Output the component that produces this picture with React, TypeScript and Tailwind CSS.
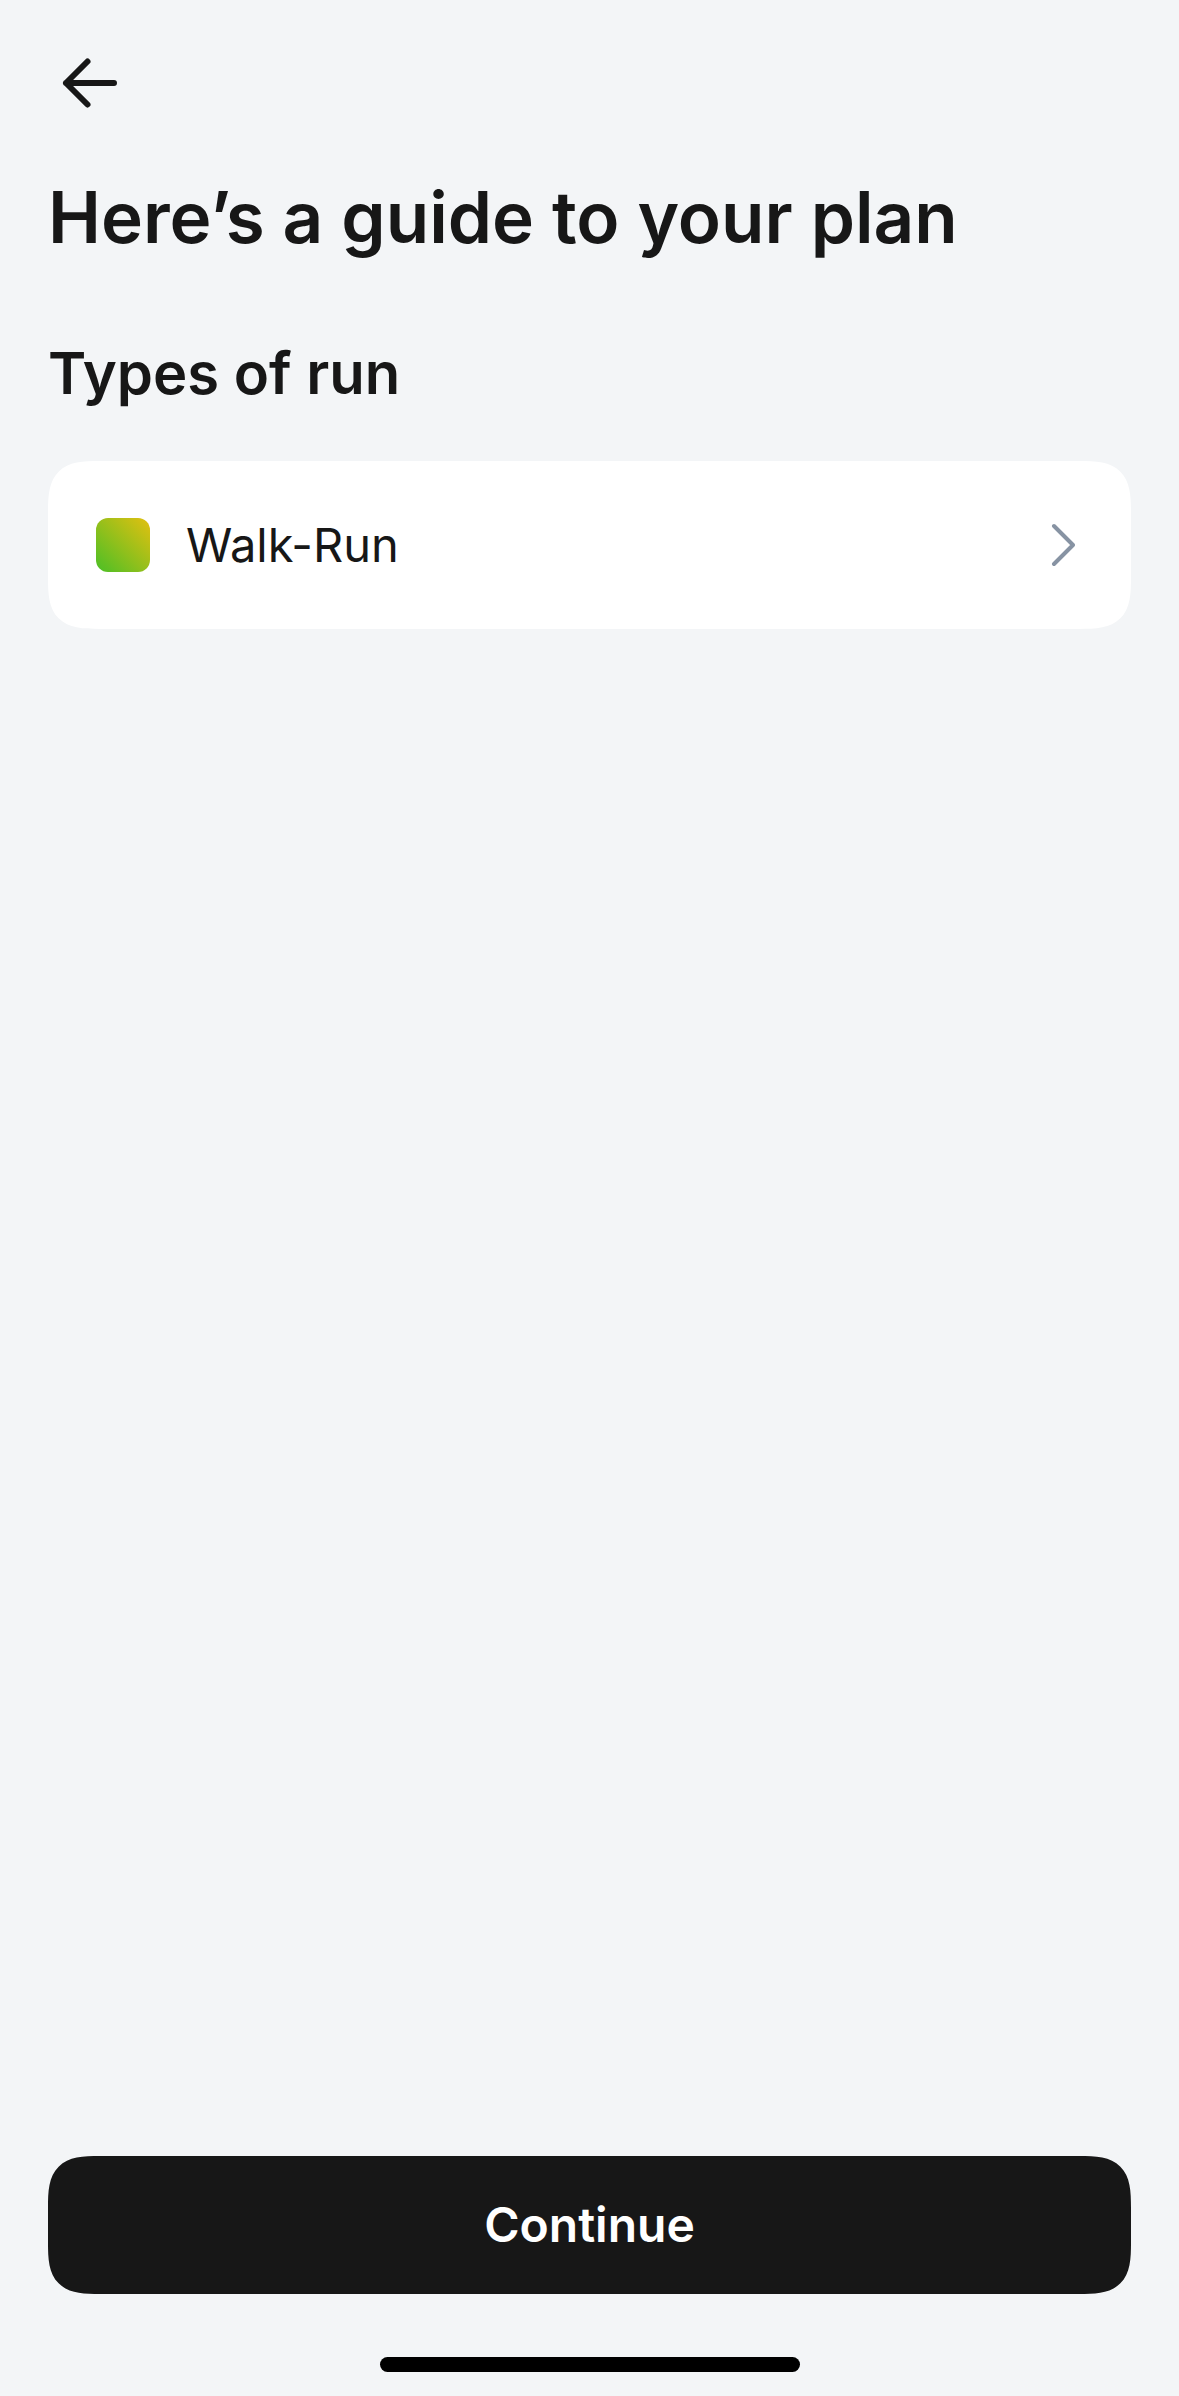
type RunType = {
  name: string;
  swatch: string;
};

const runTypes: RunType[] = [
  { name: 'Walk-Run', swatch: 'bg-linear-to-tr/srgb from-[#4abf26] to-[#e3c010]' },
];

function BackArrow() {
  return (
    <svg viewBox="0 0 60 60" className="h-[60px] w-[60px]" fill="none" aria-hidden>
      <path
        d="M54 30H6M27.5 8.5L6 30l21.5 21.5"
        stroke="currentColor"
        strokeWidth="6"
        strokeLinecap="round"
        strokeLinejoin="round"
      />
    </svg>
  );
}

function Chevron() {
  return (
    <svg viewBox="0 0 24 48" className="h-12 w-6" fill="none" aria-hidden>
      <path
        d="M3 5l19 19L3 43"
        stroke="currentColor"
        strokeWidth="4"
        strokeLinecap="round"
        strokeLinejoin="round"
      />
    </svg>
  );
}

function App() {
  return (
    <main className="flex min-h-screen flex-col bg-[#f3f5f7] px-12 pb-6 font-['Inter',sans-serif] text-[#171717]">
      <header className="pt-[53px]">
        <button type="button" aria-label="Back" className="ml-3 block">
          <BackArrow />
        </button>
      </header>

      <h1 className="mt-[60px] text-[71px] leading-[88px] font-semibold">Here’s a guide to your plan</h1>

      <section className="mt-[76px]">
        <h2 className="text-[58px] leading-[72px] font-semibold">Types of run</h2>

        <ul className="mt-[52px] flex flex-col gap-6">
          {runTypes.map((run) => (
            <li key={run.name}>
              <button
                type="button"
                className="flex h-[168px] w-full items-center rounded-[52px] bg-white px-12 [corner-shape:superellipse(1.6)]"
              >
                <span className={`h-[54px] w-[54px] rounded-xl ${run.swatch}`} />
                <span className="ml-9 flex-1 text-left text-[47px]">{run.name}</span>
                <span className="mr-2 text-[#8793a3]">
                  <Chevron />
                </span>
              </button>
            </li>
          ))}
        </ul>
      </section>

      <footer className="mt-auto flex flex-col items-center">
        <button
          type="button"
          className="h-[138px] w-full rounded-[52px] bg-[#171717] text-5xl font-semibold text-white [corner-shape:superellipse(1.6)]"
        >
          Continue
        </button>
        <div className="mt-[63px] h-[15px] w-[420px] rounded-full bg-black" />
      </footer>
    </main>
  );
}

export default App;
